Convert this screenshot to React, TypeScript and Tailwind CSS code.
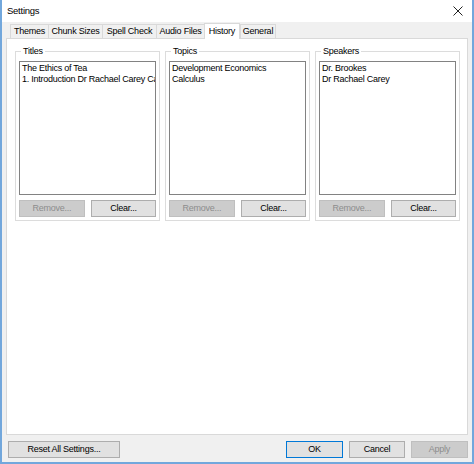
import React from 'react';

const tabs = [
  { label: 'Themes', w: 'w-[38px]' },
  { label: 'Chunk Sizes', w: 'w-[54px]' },
  { label: 'Spell Check', w: 'w-[54px]' },
  { label: 'Audio Files', w: 'w-[48px]' },
  { label: 'History', w: 'w-[36px]' },
  { label: 'General', w: 'w-[36px]' },
];

const groups = [
  { title: 'Titles', items: ['The Ethics of Tea', '1. Introduction Dr Rachael Carey Ca'] },
  { title: 'Topics', items: ['Development Economics', 'Calculus'] },
  { title: 'Speakers', items: ['Dr. Brookes', 'Dr Rachael Carey'] },
];

function Button({ label, disabled, primary, className = '' }: { label: string; disabled?: boolean; primary?: boolean; className?: string }) {
  return (
    <div
      className={`h-[17px] flex items-center justify-center border ${
        disabled
          ? 'bg-[#cccccc] border-[#bfbfbf] text-[#8c8c8c]'
          : primary
          ? 'bg-[#e1e1e1] border-[#0078d7] text-black'
          : 'bg-[#e1e1e1] border-[#adadad] text-black'
      } ${className}`}
    >
      {label}
    </div>
  );
}

function HistoryGroup({ title, items }: { title: string; items: string[] }) {
  return (
    <div className="relative w-[145px] h-[170px] border border-[#dcdcdc] px-[3px] pt-[9px]">
      <span className="absolute left-[5px] top-[-7px] bg-white px-[2px] leading-[12px]">{title}</span>
      <div className="h-[134px] border border-[#828282] bg-white px-[2px] pt-[1px] leading-[11px] overflow-hidden whitespace-nowrap">
        {items.map((it) => (
          <div key={it}>{it}</div>
        ))}
      </div>
      <div className="flex gap-[6px] mt-[5px]">
        <Button label="Remove..." disabled className="w-[67px]" />
        <Button label="Clear..." className="w-[66px]" />
      </div>
    </div>
  );
}

export default function App() {
  return (
    <div
      className="w-[474px] h-[464px] flex flex-col bg-[#f0f0f0] border-l-2 border-r-2 border-b-2 border-[#72a7dc] text-[9px] tracking-[-0.25px] text-black"
      style={{ fontFamily: '"Liberation Sans", Arial, sans-serif' }}
    >
      <div className="h-[22px] bg-white flex items-center justify-between pl-[5px] pr-[9px]">
        <span className="text-[9.5px]">Settings</span>
        <svg width="10" height="10" viewBox="0 0 10 10">
          <path d="M0.5 0.5 L9.5 9.5 M9.5 0.5 L0.5 9.5" stroke="#222" strokeWidth="1" />
        </svg>
      </div>

      <div className="flex-1 flex flex-col px-[4px]">
        <div className="flex items-end h-[16px] pl-[4px]">
          {tabs.map((t, i) =>
            t.label === 'History' ? (
              <div key={t.label} className={`${t.w} h-[16px] bg-white border border-b-0 border-[#d9d9d9] flex items-center justify-center -mb-px relative z-10`}>
                {t.label}
              </div>
            ) : (
              <div
                key={t.label}
                className={`${t.w} h-[14px] border border-b-0 border-[#d9d9d9] ${i === 3 ? 'border-r-0' : ''} ${i < 3 ? 'border-r-0' : ''} flex items-center justify-center bg-[#f0f0f0]`}
              >
                {t.label}
              </div>
            )
          )}
        </div>
        <div className="h-[397px] bg-white border border-[#d9d9d9] flex gap-[5px] pl-[8px] pt-[12px]">
          {groups.map((g) => (
            <HistoryGroup key={g.title} title={g.title} items={g.items} />
          ))}
        </div>
        <div className="flex items-center mt-[6px]">
          <Button label="Reset All Settings..." className="w-[112px] ml-[2px]" />
          <div className="flex-1" />
          <div className="flex gap-[6px]">
            <Button label="OK" primary className="w-[57px]" />
            <Button label="Cancel" className="w-[56px]" />
            <Button label="Apply" disabled className="w-[57px]" />
          </div>
        </div>
      </div>
    </div>
  );
}
